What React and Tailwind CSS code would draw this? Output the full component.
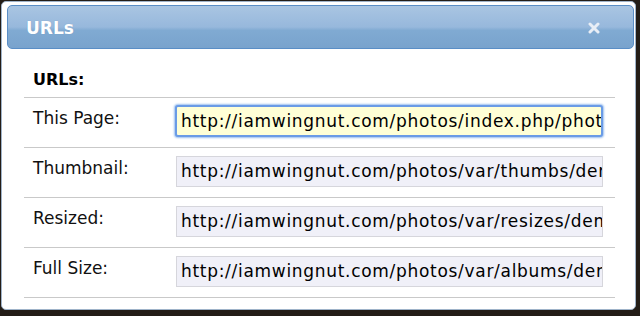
import React from "react";

const rows = [
  { label: "This Page:", url: "http://iamwingnut.com/photos/index.php/photos/wingnut", focus: true },
  { label: "Thumbnail:", url: "http://iamwingnut.com/photos/var/thumbs/demo.jpg" },
  { label: "Resized:", url: "http://iamwingnut.com/photos/var/resizes/demo.jpg" },
  { label: "Full Size:", url: "http://iamwingnut.com/photos/var/albums/demo.jpg" },
];

export default function App() {
  return (
    <div className="w-[640px] h-[316px] bg-[#231d17] pt-px pl-px overflow-hidden font-['DejaVu_Sans',sans-serif]">
      <div className="w-[635px] h-[309px] bg-white rounded-[5px] border border-[#9fb3c9] pt-[3px] pl-[5px] pr-px">
        {/* title bar */}
        <div className="h-[44px] rounded-[5px] border border-[#5a8ec6] bg-[linear-gradient(to_bottom,#a9c5e2_0%,#97b8dc_50%,#80aad2_58%,#79a3cd_100%)] flex items-center justify-between pl-[18px] pr-[33px]">
          <span className="text-white font-bold text-[17px] leading-none pt-[3px] [text-shadow:0_0_1px_#6f95bf]">URLs</span>
          <svg width="12" height="12" viewBox="0 0 12 12" className="mt-[2px]">
            <path d="M2 2 L10 10 M10 2 L2 10" stroke="#e8eef6" strokeWidth="3" strokeLinecap="round" />
          </svg>
        </div>

        {/* content */}
        <div className="pl-[17px] pr-[19px]">
          <div className="border-b border-[#c9c9c9] h-[49px] pl-[9px] pt-[19px]">
            <span className="font-bold text-[16px] text-black leading-5">URLs:</span>
          </div>
          {rows.map((r) => (
            <div key={r.label} className="flex items-start border-b border-[#c9c9c9] h-[50px]">
              <div className="w-[151px] pl-[9px] pt-[10px] text-[17px] leading-5 text-[#111]">{r.label}</div>
              {r.focus ? (
                <div className="mt-[7px] w-[428px] h-[32px] rounded-[3px] border-2 border-[#6a9be6] shadow-[0_0_2px_1px_#9cc0f0] bg-[#ffffd6] pl-[4px] pt-[4px] overflow-hidden">
                  <div className="whitespace-nowrap text-[17px] leading-5 tracking-[0.7px] text-black">{r.url}</div>
                </div>
              ) : (
                <div className="mt-[8px] ml-px w-[427px] h-[31px] border border-[#d6d6dc] bg-[#f0f0f8] pl-[4px] pt-[4px] overflow-hidden">
                  <div className="whitespace-nowrap text-[17px] leading-5 tracking-[0.7px] text-black">{r.url}</div>
                </div>
              )}
            </div>
          ))}
        </div>
      </div>
    </div>
  );
}
